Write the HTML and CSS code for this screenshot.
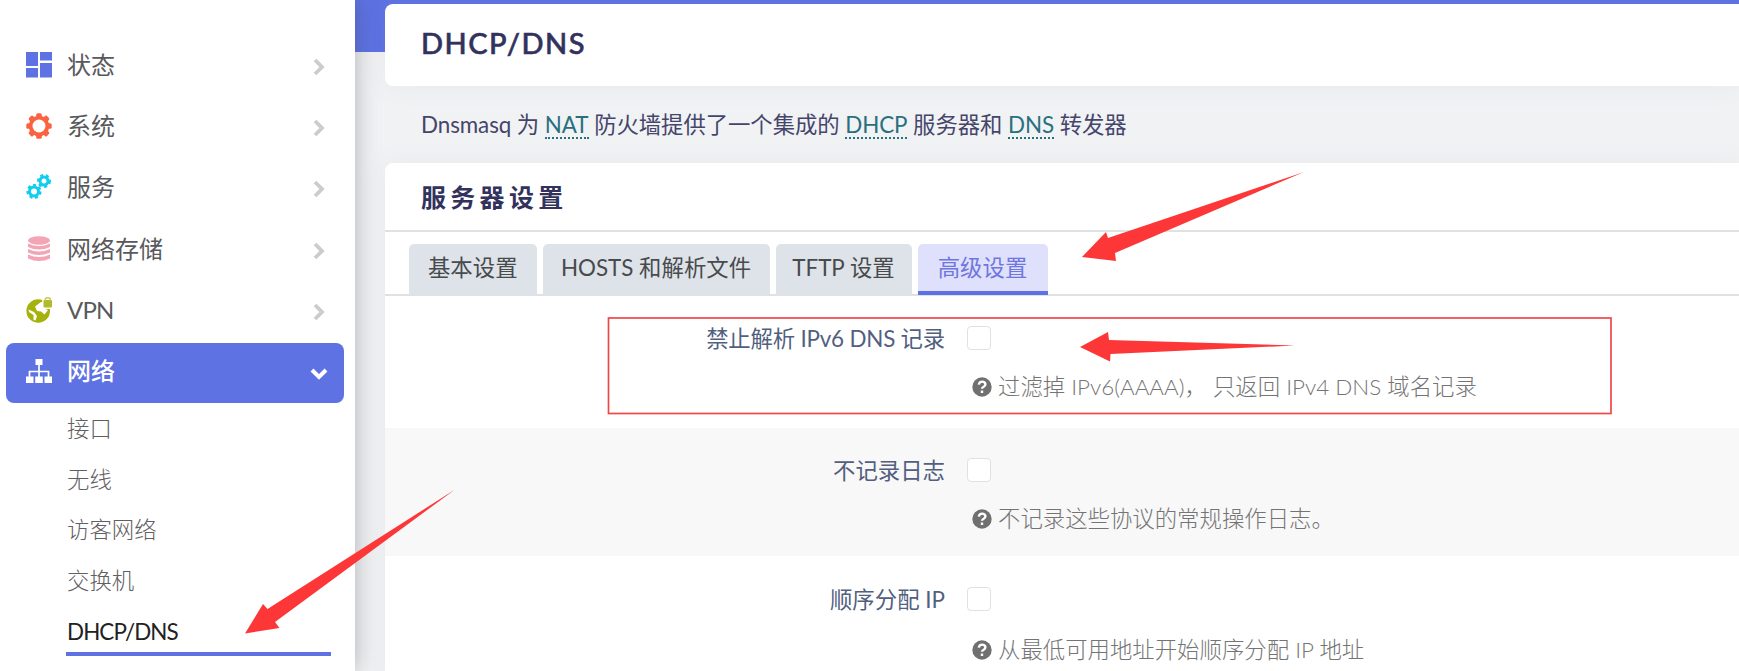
FILE: index.html
```html
<!DOCTYPE html>
<html lang="zh-CN">
<head>
<meta charset="utf-8">
<title>DHCP/DNS</title>
<link rel="stylesheet" href="styles.css">
</head>
<body>
<div class="app">
  <nav class="sidebar">
    <a class="item"><svg class="icon" viewBox="0 0 26 26" fill="#5e72e4"><path d="M0 0h12v14H0zM14 0h12v8.500H14zM0 16h12v9.500H0zM14 11h12v14.500H14z"/></svg><span class="name">状态</span><svg class="chev" viewBox="0 0 18 18"><path d="M5 2l7 7-7 7"/></svg></a>
    <a class="item"><svg class="icon" viewBox="-13 -13 26 26"><g fill="#fb6340"><circle r="10.300"/><g id="teeth"><rect x="-2.800" y="-12.700" width="5.600" height="25.400" rx="1.500"/><rect x="-12.700" y="-2.800" width="25.400" height="5.600" rx="1.500"/></g><use href="#teeth" transform="rotate(45)"/></g><circle r="6.500" fill="#fff"/></svg><span class="name">系统</span><svg class="chev" viewBox="0 0 18 18"><path d="M5 2l7 7-7 7"/></svg></a>
    <a class="item"><svg class="icon" viewBox="0 0 26 26" fill="none" stroke="#11cdef"><g stroke-width="3"><circle cx="8" cy="17.500" r="4.500"/><circle cx="18" cy="7" r="4"/></g><g stroke-width="2.600" stroke-dasharray="3 2.600"><circle cx="8" cy="17.500" r="6.300"/><circle cx="18" cy="7" r="5.700"/></g></svg><span class="name">服务</span><svg class="chev" viewBox="0 0 18 18"><path d="M5 2l7 7-7 7"/></svg></a>
    <a class="item"><svg class="icon" viewBox="0 0 26 26" fill="#f3a4b5"><ellipse cx="13" cy="4.500" rx="11" ry="4.200"/><path d="M2 7.500q11 5 22 0v3.500q-11 5-22 0zM2 13q11 5 22 0v3.500q-11 5-22 0zM2 18.500q11 5 22 0v4q-11 5-22 0z"/></svg><span class="name">网络存储</span><svg class="chev" viewBox="0 0 18 18"><path d="M5 2l7 7-7 7"/></svg></a>
    <a class="item"><svg class="icon" viewBox="0 0 26 26"><circle cx="12.200" cy="14" r="11.800" fill="#a6b20c"/><path d="M9 9.500l6-4.500h3v6.500l4 1.500-3.500 4.500-3.500-3-4-.5z" fill="#fff"/><path d="M2.500 12.500l5.500 2.500 3 4-1.500 4.500-2-.8V18l-4.500-3z" fill="#fff"/><path d="M16 0h10v12h-9.500z" fill="#fff"/><rect x="17.500" y="3" width="8.500" height="7.500" rx="1" fill="#b0ba2c"/><path d="M19.300 3.500V1.800q2.500-2.400 5 0v1.700" fill="none" stroke="#c6cf5e" stroke-width="1.600"/></svg><span class="name"><span class="vpn">VPN</span></span><svg class="chev" viewBox="0 0 18 18"><path d="M5 2l7 7-7 7"/></svg></a>
    <a class="item active"><svg class="icon" viewBox="0 0 26 26" fill="#fff"><path d="M9.500 1h7v6h-7zM0 18.500h7.500v6.500H0zM9.200 18.500h7.600v6.500H9.200zM18.500 18.500H26v6.500h-7.500z"/><path d="M13 7v12M3.500 19v-5.500h19V19" fill="none" stroke="#fff" stroke-width="1.700"/></svg><span class="name">网络</span><svg class="chev" viewBox="0 0 18 18"><path d="M2 6l7 7 7-7"/></svg></a>
    <div class="sub">
      <a>接口</a><a>无线</a><a>访客网络</a><a>交换机</a><a class="current">DHCP/DNS</a>
    </div>
  </nav>
  <main class="main">
    <header class="card title"><h1>DHCP/DNS</h1></header>
    <p class="intro">Dnsmasq 为 <abbr>NAT</abbr> 防火墙提供了一个集成的 <abbr>DHCP</abbr> 服务器和 <abbr>DNS</abbr> 转发器</p>
    <section class="card settings">
      <h2>服务器设置</h2>
      <div class="tabs"><a class="t1">基本设置</a><a class="t2">HOSTS 和解析文件</a><a class="t3">TFTP 设置</a><a class="t4 on">高级设置</a></div>
      <div class="row"><label class="tight">禁止解析 IPv6 DNS 记录</label><div class="field"><i class="box"></i><p><svg class="q" viewBox="0 0 20 20"><circle cx="10" cy="10" r="9.700" fill="#707070"/><path d="M6.800 7.600q.5-3 3.400-3t3.200 2.600q0 1.600-1.700 2.500t-1.700 2.100M10 13.600v2.500" fill="none" stroke="#fff" stroke-width="2.400"/></svg><span>过滤掉 IPv6(AAAA)， 只返回 IPv4 DNS 域名记录</span></p></div></div>
      <div class="row alt"><label>不记录日志</label><div class="field"><i class="box"></i><p><svg class="q" viewBox="0 0 20 20"><circle cx="10" cy="10" r="9.700" fill="#707070"/><path d="M6.800 7.600q.5-3 3.400-3t3.200 2.600q0 1.600-1.700 2.500t-1.700 2.100M10 13.600v2.500" fill="none" stroke="#fff" stroke-width="2.400"/></svg><span>不记录这些协议的常规操作日志。</span></p></div></div>
      <div class="row last"><label>顺序分配 IP</label><div class="field"><i class="box"></i><p><svg class="q" viewBox="0 0 20 20"><circle cx="10" cy="10" r="9.700" fill="#707070"/><path d="M6.800 7.600q.5-3 3.400-3t3.200 2.600q0 1.600-1.700 2.500t-1.700 2.100M10 13.600v2.500" fill="none" stroke="#fff" stroke-width="2.400"/></svg><span>从最低可用地址开始顺序分配 IP 地址</span></p></div></div>
    </section>
  </main>
  <svg class="marks" viewBox="0 0 1739 671"><rect x="608.500" y="318" width="1002.500" height="95.500" fill="none" stroke="#f04747" stroke-width="1.700"/><g fill="#fd3737"><path d="M1082 257l24-25 2 6 196-66-189 81 1 8z"/><path d="M1080 347l28-15 1 8 186 5.500-184.500 8.500-.5 7.500z"/><path d="M245 633.500l18-29.500 4.500 5L455 489.500 275 622l4.500 6z"/></g></svg>
</div>
</body>
</html>
```
FILE: styles.css
```css
* { box-sizing: border-box; }
body { margin: 0; font-family: Lato, "Noto Sans CJK SC", sans-serif; }
.app { position: relative; display: flex; width: 1739px; height: 671px; overflow: hidden; background: #f1f2f4; }
.sidebar { position: relative; z-index: 1; flex: none; width: 355px; padding: 34px 11px 0 6px; background: #fff; box-shadow: 0 0 22px rgba(60, 70, 75, .38); }
.item { display: flex; align-items: center; height: 61.400px; padding: 0 16px 0 20px; color: #58595c; font-size: 24px; line-height: 34px; }
.icon { width: 26px; height: 26px; margin-right: 15px; }
.name { flex: 1; }
.vpn { letter-spacing: -.8px; }
.chev { width: 18px; height: 18px; margin-top: 4px; fill: none; stroke: #cbcccd; stroke-width: 3.800; }
.active { height: 60px; margin-top: 2px; padding-bottom: 3px; border-radius: 8px; background: #5e72e4; color: #fff; font-weight: 500; }
.active .chev { stroke: #fff; stroke-width: 4; }
.sub { display: flex; flex-direction: column; padding-left: 60px; }
.sub a { height: 50.700px; width: 265px; padding: 11px 0 0 1px; color: #5f6062; font-size: 22.400px; font-weight: 300; line-height: 30px; white-space: nowrap; }
.sub .current { border-bottom: 4px solid #5e72e4; color: #222; font-weight: 400; letter-spacing: -.9px; }
.main { flex: 1; padding: 4px 0 0 30px; background: linear-gradient(#5e72e4 52px, transparent 52px); }
.card { background: #fff; border-radius: 8px 0 0 8px; box-shadow: 0 0 24px rgba(110, 125, 140, .08); }
.title { height: 82px; padding: 20px 36px; }
h1 { margin: 0; font-size: 29px; line-height: 38px; font-weight: 500; letter-spacing: 1.500px; color: #32325d; -webkit-text-stroke: .6px #32325d; }
.intro { height: 77px; margin: 0; padding: 23px 36px; color: #45456b; font-size: 22.400px; line-height: 32px; letter-spacing: -.08px; white-space: nowrap; }
abbr { color: #287080; border-bottom: 2px dotted #287080; display: inline-block; line-height: 24px; }
.settings { height: 520px; border-radius: 8px 0 0 0; }
h2 { margin: 0; height: 69px; padding: 17px 36px; border-bottom: 2px solid #dfe1e3; font-size: 25px; line-height: 34px; font-weight: 600; letter-spacing: 4.300px; color: #32325d; }
.tabs { display: flex; height: 64px; padding: 12px 24px 0; border-bottom: 2px solid #dfe1e3; }
.tabs a { height: 50.500px; margin-right: 6px; border-radius: 5px 5px 0 0; background: #dde3e8; color: #484a4d; font-size: 22.400px; line-height: 47px; text-align: center; white-space: nowrap; }
.tabs .t1 { width: 127.500px; }
.tabs .t2 { width: 227px; }
.tabs .t3 { width: 136px; }
.tabs .t4 { width: 130px; }
.tabs .on { border-bottom: 4px solid #5e72e4; background: #dfe0fc; color: #7076e0; }
.row { display: flex; height: 132px; padding-top: 26px; }
.row.alt { height: 128px; background: #f8f8f8; }
.row.last { padding-top: 27px; }
.row.last p { margin-top: 22px; }
label { width: 560px; margin-right: 22px; text-align: right; color: #525f7f; font-size: 22.400px; line-height: 33px; }
.tight { letter-spacing: -.2px; }
.box { display: block; width: 24px; height: 24px; margin-top: 4px; border: 1.500px solid #e0e1e4; border-radius: 4px; background: #fff; }
.field p { display: flex; align-items: center; height: 34px; margin: 20px 0 0 5px; color: #747474; font-size: 22.400px; font-weight: 300; line-height: 34px; white-space: nowrap; }
.q { width: 20px; height: 20px; margin-right: 6px; }
.marks { position: absolute; z-index: 2; inset: 0; width: 1739px; height: 671px; pointer-events: none; }
```
